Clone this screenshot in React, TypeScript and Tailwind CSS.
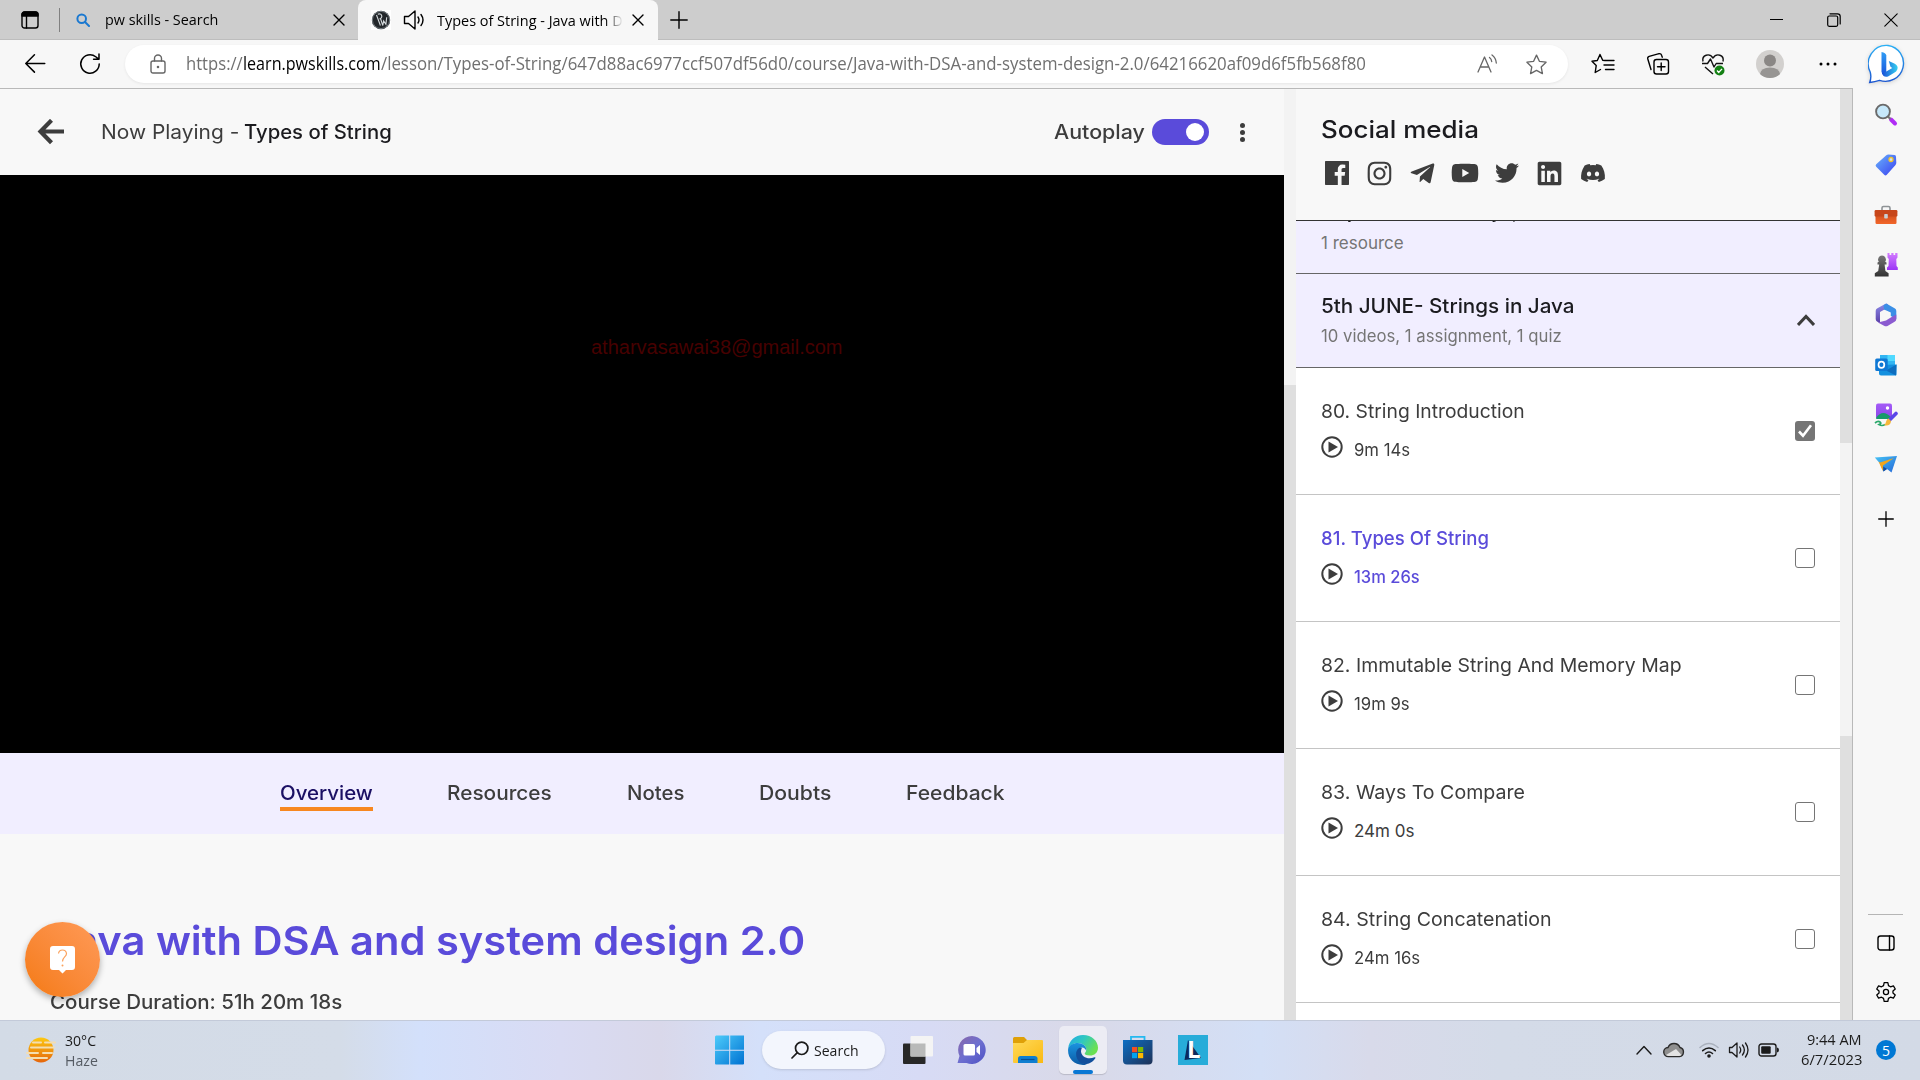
import React, { useLayoutEffect, useRef } from "react";
import { FaInstagram, FaTelegramPlane, FaYoutube, FaTwitter, FaLinkedin, FaDiscord } from "react-icons/fa";

const SANS = "font-['Inter',sans-serif]";
const UI = "font-['Open_Sans',sans-serif]";

/** Single line of text stretched or condensed to a given width. */
function Fit({ w, className = "", children }: { w: number; className?: string; children: React.ReactNode }) {
  const ref = useRef<HTMLSpanElement>(null);
  useLayoutEffect(() => {
    const el = ref.current;
    if (el) el.style.transform = `scaleX(${w / el.offsetWidth})`;
  }, [w]);
  return (
    <div className={`shrink-0 ${className}`} style={{ width: w }}>
      <span ref={ref} className="block w-max origin-left whitespace-pre">{children}</span>
    </div>
  );
}

type IconProps = { className?: string; children: React.ReactNode; box?: string; sw?: number };
function Line({ className = "", children, box = "0 0 24 24", sw = 1.4 }: IconProps) {
  return (
    <svg viewBox={box} className={`block shrink-0 ${className}`} fill="none" stroke="currentColor" strokeWidth={sw} strokeLinecap="round" strokeLinejoin="round">
      {children}
    </svg>
  );
}

const STAR = "M12 2.2l3 6.5 7 .9-5.1 4.9 1.3 7L12 18.1l-6.2 3.4 1.3-7L2 9.6l7-.9z";

function TabStrip() {
  return (
    <div className={`flex h-10 border-b border-[#bdbdbd] bg-[#cdcdcd] text-[15px] leading-[39px] text-black ${UI}`}>
      <div className="flex w-[358px] items-center rounded-br-lg">
        <Line box="0 0 18 18" className="ml-[21px] h-[18px] w-[18px]">
          <rect x="1" y="1" width="16" height="16" rx="2.5" />
          <path d="M1 3.5A2.5 2.5 0 013.5 1h11A2.5 2.5 0 0117 3.5V5H1z" fill="currentColor" />
          <path d="M5.5 5v12" />
        </Line>
        <div className="ml-5 h-6 w-px bg-[#808080]" />
        <Line box="0 0 14 14" sw={2} className="ml-[16px] h-[14px] w-[14px] text-[#1a78d0]">
          <circle cx="5.7" cy="5.7" r="4.3" />
          <path d="M9 9l4 4" />
        </Line>
        <Fit w={113} className="ml-[15px]">pw skills - Search</Fit>
        <Line box="0 0 12 12" className="ml-[115px] h-3 w-3"><path d="M1 1l10 10M11 1L1 11" /></Line>
      </div>
      <div className="flex h-10 w-[300px] items-center rounded-t-lg bg-[#f7f7f7]">
        <div className="ml-[13px] bg-white">
          <svg viewBox="0 0 20 20" className="block h-5 w-5">
            <circle cx="10" cy="10" r="9.2" fill="#23272b" />
            <circle cx="10" cy="10" r="8.600" fill="none" stroke="#7b8288" strokeWidth=".9" />
            <path d="M5.500 5l3.900 10.500M6.800 4.300c3.400-1.800 6 2.700 1.700 4.800M9.500 8.500l2.300 7 .8-4.600 2.300 3.400.8-7" fill="none" stroke="#d5dadd" strokeWidth="1.100" />
          </svg>
        </div>
        <Line box="0 0 22 20" className="ml-3 h-5 w-[22px]">
          <path d="M1.500 6.500h4L12 1v18l-6.500-5.500h-4z" />
          <path d="M15 7q2 3 0 6M18 4.500q4 5.500 0 11" />
        </Line>
        <div className="ml-3 w-[186px] overflow-hidden [mask-image:linear-gradient(to_right,#000_168px,transparent_186px)]">
          <Fit w={186}>Types of String - Java with D</Fit>
        </div>
        <Line box="0 0 12 12" className="ml-[9px] h-3 w-3"><path d="M1 1l10 10M11 1L1 11" /></Line>
      </div>
      <div className="flex flex-1 items-center">
        <Line box="0 0 18 18" className="ml-3 h-[18px] w-[18px]"><path d="M9 .8v16.400M.8 9h16.400" /></Line>
        <div className="ml-[1082px] h-px w-[13px] bg-black" />
        <Line box="0 0 14 14" sw={1.200} className="ml-11 h-[14px] w-[14px]">
          <rect x=".7" y="3" width="10" height="10.300" rx="1.500" />
          <path d="M3 .8h7.500a2.700 2.700 0 012.700 2.700V11" />
        </Line>
        <Line box="0 0 14 14" sw={1.100} className="ml-[43px] h-[14px] w-[14px]"><path d="M.8.8l12.400 12.400M13.200.8L.8 13.200" /></Line>
      </div>
    </div>
  );
}

function BingLogo() {
  return (
    <svg viewBox="0 0 40 40" className="ml-[31px] block h-10 w-10 shrink-0 drop-shadow-sm">
      <defs>
        <linearGradient id="bg1" x1="0" y1="0" x2="0" y2="1"><stop offset="0" stopColor="#2bb0f5" /><stop offset="1" stopColor="#1c56d0" /></linearGradient>
        <linearGradient id="bg2" x1="0" y1="0" x2="1" y2="0"><stop offset="0" stopColor="#1b4fd6" /><stop offset="1" stopColor="#35d0f0" /></linearGradient>
        <linearGradient id="bg3" x1="0" y1="0" x2="0" y2="1"><stop offset="0" stopColor="#2f9df5" /><stop offset="1" stopColor="#1a56dc" /></linearGradient>
      </defs>
      <path d="M20 1.500a18 18 0 11-8.500 34.800q-4.500 1.500-9.800 2.200 2-5 .5-10.500A18.300 18.300 0 0120 1.500z" fill="#fff" stroke="url(#bg1)" strokeWidth="1.400" />
      <path d="M13.500 8q4.300.7 4.800 3.500v15.800L16 31q-2.500-.7-2.500-3.500z" fill="url(#bg3)" />
      <path d="M14 29l4.300-1.500 6-3.500-1.800-1.200-1.700-5.800 5.500 2.500q4.500 2.500 3 6-.7 2-3.500 3.500L20 32.500q-4.500 1.500-6-3.500z" fill="url(#bg2)" />
    </svg>
  );
}

function Toolbar() {
  return (
    <div className={`flex h-12 items-center bg-[#f7f7f7] text-black ${UI}`}>
      <Line className="ml-[22px] h-[26px] w-[26px]"><path d="M21 11.500H3.500M11.500 3.500l-8 8 8 8" /></Line>
      <Line className="ml-[29px] h-[26px] w-[26px]"><path d="M20.500 12a8.500 8.500 0 11-3.200-6.700L20 7.500M20.300 2.700v5h-5" /></Line>
      <div className="ml-[22px] flex h-[38px] w-[1443px] items-center rounded-full bg-white shadow-[0_1px_3px_rgba(0,0,0,0.07)]">
        <Line box="0 0 16 20" className="ml-[25px] h-5 w-4 text-[#666]">
          <rect x="1" y="7" width="14" height="12" rx="2" /><path d="M4.500 7V4.500a3.500 3.500 0 017 0V7" /><circle cx="8" cy="13" r=".6" fill="currentColor" />
        </Line>
        <div className="ml-[20px] flex pb-[2px] text-[17.500px] leading-[36px] text-[#707070]">
          <Fit w={57}>https://</Fit>
          <Fit w={138} className="text-black">learn.pwskills.com</Fit>
          <Fit w={985}>/lesson/Types-of-String/647d88ac6977ccf507df56d0/course/Java-with-DSA-and-system-design-2.0/64216620af09d6f5fb568f80</Fit>
        </div>
        <Line box="0 0 22 20" sw={1.300} className="ml-[111px] h-5 w-[22px] text-[#666]">
          <path d="M1 18L7.500 3 14 18M3.500 13h8M12.500 3.500q2 1.500 2.200 4M15 1q4 3 4.300 8" />
        </Line>
        <Line className="ml-[26px] h-[23px] w-[23px] text-[#666]"><path d={STAR} /></Line>
      </div>
      <Line className="ml-[23px] h-6 w-6">
        <path d="M14 8.500l-2.300-.3L9 2.500 6.300 8.500 1 9.300l4.200 4.300-1 6.900L9.500 17.500M14.500 8.500H23M13 13h10M14.500 17.500H23" />
      </Line>
      <Line className="ml-[31px] h-6 w-6">
        <rect x="8" y="7.500" width="14.500" height="14.500" rx="2.500" /><path d="M15.200 11v7.500M11.500 14.700H19M5 17.500L1.800 7Q1.300 5 3.200 4.400L13 1.700q2-.4 2.600 1.500l.7 2" />
      </Line>
      <svg viewBox="0 0 24 24" className="ml-[31px] block h-6 w-6 shrink-0" fill="none" stroke="#111" strokeWidth="1.400" strokeLinejoin="round">
        <path d="M2 9.500C.5 3 8.500.5 12 6c3.500-5.500 11.500-3 10 3.500M1 11.500h5.500l3-4.500 3.500 8 2.200-3.500H22M4 15l8 7" />
        <circle cx="18.500" cy="18.500" r="5" fill="#138013" stroke="none" /><path d="M16 18.600l1.800 1.800 3.200-3.500" stroke="#fff" />
      </svg>
      <svg viewBox="0 0 28 28" className="ml-[31px] block h-7 w-7 shrink-0">
        <circle cx="14" cy="14" r="14" fill="#d2d0ce" /><circle cx="14" cy="10.500" r="6" fill="#8a8785" />
        <path d="M4 24q1-6.500 10-6.500T24 24q-4 4-10 4T4 24z" fill="#979593" />
      </svg>
      <svg viewBox="0 0 18 4" className="ml-[35px] block h-1 w-[18px] shrink-0"><circle cx="2" cy="2" r="1.500" /><circle cx="9" cy="2" r="1.500" /><circle cx="16" cy="2" r="1.500" /></svg>
      <BingLogo />
    </div>
  );
}

const TABS: [string, number, string][] = [
  ["Overview", 93, "ml-[280px] text-[#1b1064]"],
  ["Resources", 105, "ml-[74px]"],
  ["Notes", 57, "ml-[75px]"],
  ["Doubts", 72, "ml-[75px]"],
  ["Feedback", 99, "ml-[75px]"],
];

function LessonColumn() {
  return (
    <main className={`relative flex h-full w-[1284px] flex-col bg-[#f8f8f8] text-[20px] text-[#3d3d3d] ${SANS}`}>
      <header className="flex h-[86px] shrink-0 items-center">
        <Line box="0 0 28 26" sw={4.200} className="ml-[37px] h-[26px] w-7 [stroke-linecap:butt] [stroke-linejoin:miter]">
          <path d="M27 12.500H4M14.500 1.300L3.500 12.500l11 11.200" />
        </Line>
        <Fit w={138} className="ml-9 leading-[86px]">Now Playing -</Fit>
        <Fit w={148} className="ml-[5px] font-medium leading-[86px] text-[#1b1b1f]">Types of String</Fit>
        <Fit w={91} className="ml-[662px] font-medium leading-[86px]">Autoplay</Fit>
        <div className="ml-[7px] flex h-[26px] w-[57px] items-center justify-end rounded-full bg-[#5a4bda] pr-[5px]">
          <div className="h-[18px] w-[18px] rounded-full bg-white" />
        </div>
        <div className="ml-[31px] flex flex-col gap-[2px]">
          {[0, 1, 2].map((i) => <div key={i} className="h-[5px] w-[5px] rounded-full bg-[#3d3d3d]" />)}
        </div>
      </header>
      <div className="flex h-[578px] shrink-0 bg-black">
        <Fit w={252} className="ml-[591px] mt-[160px] h-6 font-['Liberation_Sans',sans-serif] leading-6 text-[#470000]">atharvasawai38@gmail.com</Fit>
      </div>
      <nav className="flex h-[81px] shrink-0 bg-[#f1eeff] font-medium">
        {TABS.map(([label, w, cls], i) => (
          <div key={label} className={`h-[58px] ${cls} ${i === 0 ? "border-b-4 border-[#f7871f]" : ""}`}>
            <Fit w={w} className="pt-[25px] leading-[31px]">{label}</Fit>
          </div>
        ))}
      </nav>
      <Fit w={755} className="ml-[50px] mt-[77px] text-[40px] font-semibold leading-[60px] text-[#5a4bda]">Java with DSA and system design 2.0</Fit>
      <Fit w={292} className="ml-[50px] mt-[16px] font-medium leading-[30px]">Course Duration: 51h 20m 18s</Fit>
      <div className="absolute bottom-[23px] left-[25px] flex h-[75px] w-[75px] items-center justify-center rounded-full bg-linear-to-tr from-[#f47a0a] to-[#ff9a56] shadow-[0_3px_6px_rgba(0,0,0,0.3)]">
        <svg viewBox="0 0 25 28" className="block h-7 w-[25px]">
          <path d="M3 0h19q3 0 3 3v18q0 3-3 3h-6l-3.500 3.500L9 24H3q-3 0-3-3V3q0-3 3-3z" fill="#fff" />
          <path d="M8.500 7.500q.5-3.500 4-3.500t4 3.500c0 3.500-4 3.500-4 8" fill="none" stroke="#fba15c" strokeWidth="1.200" />
          <circle cx="12.500" cy="19.500" r="1" fill="#fba15c" />
        </svg>
      </div>
    </main>
  );
}

const LESSONS: { title: string; w: number; time: string; tw: number; state?: "done" | "active" }[] = [
  { title: "80. String Introduction", w: 204, time: "9m 14s", tw: 56, state: "done" },
  { title: "81. Types Of String", w: 168, time: "13m 26s", tw: 66, state: "active" },
  { title: "82. Immutable String And Memory Map", w: 361, time: "19m 9s", tw: 56 },
  { title: "83. Ways To Compare", w: 204, time: "24m 0s", tw: 60 },
  { title: "84. String Concatenation", w: 231, time: "24m 16s", tw: 66 },
];

function CoursePanel() {
  const active = "font-medium text-[#5a4bda]";
  return (
    <aside className={`flex h-full w-[544px] flex-col overflow-hidden bg-white text-[#3d3d3d] ${SANS}`}>
      <div className="h-[132px] shrink-0 border-b border-[#333] bg-[#f8f8f8] pl-[25px] pt-[23px]">
        <Fit w={158} className="text-[24px] font-medium leading-[36px] text-[#1b1b1f]">Social media</Fit>
        <div className="mt-[11px] flex h-7 items-center">
          <svg viewBox="2 2 20 20" className="ml-1 block h-6 w-6" fill="currentColor">
            <path d="M21.400 2H2.600a.6.6 0 00-.6.6v18.800a.6.6 0 00.6.6h10.080v-7.750h-2.600v-3h2.600V9a3.640 3.640 0 013.880-4 20.260 20.260 0 012.330.12v2.700H17.300c-1.260 0-1.500.6-1.500 1.470v1.930h3l-.39 3H15.800V22h5.600a.6.6 0 00.6-.6V2.600a.6.6 0 00-.6-.6z" />
          </svg>
          <FaInstagram className="ml-[17px] h-[27px] w-[27px]" />
          <FaTelegramPlane className="ml-[16px] h-[27px] w-[27px]" />
          <FaYoutube className="ml-[15px] h-7 w-7" />
          <FaTwitter className="ml-[16px] h-6 w-6" />
          <FaLinkedin className="ml-[17px] h-[27px] w-[27px]" />
          <FaDiscord className="ml-[17px] h-[26px] w-[26px]" />
        </div>
      </div>
      <div className="h-[53px] shrink-0 overflow-hidden border-b border-[#666] bg-[#f1eeff] pl-[25px]">
        <Fit w={197} className="-mt-[25px] h-[30px] text-[20px] font-medium leading-[30px] text-[#1b1b1f]">Major Basics - Arrays,</Fit>
        <Fit w={83} className="mt-[4px] text-[17px] leading-[26px] text-[#757575]">1 resource</Fit>
      </div>
      <div className="flex h-[94px] shrink-0 items-center justify-between border-b border-[#666] bg-[#f1eeff] pb-[2px] pl-[25px] pr-[25px]">
        <div>
          <Fit w={254} className="text-[20px] font-medium leading-[30px] text-[#1b1b1f]">5th JUNE- Strings in Java</Fit>
          <Fit w={241} className="mt-[2px] text-[17px] leading-[26px] text-[#757575]">10 videos, 1 assignment, 1 quiz</Fit>
        </div>
        <Line box="0 0 18 12" sw={3} className="h-3 w-[18px] [stroke-linecap:butt] [stroke-linejoin:miter]"><path d="M1 11l8-8.500 8 8.500" /></Line>
      </div>
      {LESSONS.map((l) => (
        <div key={l.title} className="flex h-[127px] shrink-0 justify-between border-b border-[#c4c4c4] pl-[25px] pr-[25px]">
          <div className="pt-[29px]">
            <Fit w={l.w} className={`text-[19px] leading-[30px] ${l.state === "active" ? active : ""}`}>{l.title}</Fit>
            <div className="mt-[8px] flex">
              <svg viewBox="0 0 22 22" className="mt-[1px] block h-[22px] w-[22px]">
                <circle cx="11" cy="11" r="9.700" fill="none" stroke="#3d3d3d" strokeWidth="2" /><path d="M7.500 5.500L17 11l-9.500 5.500z" fill="#3d3d3d" />
              </svg>
              <Fit w={l.tw} className={`ml-[11px] text-[17px] leading-[30px] ${l.state === "active" ? active : ""}`}>{l.time}</Fit>
            </div>
          </div>
          <div className={`mt-[53px] flex h-5 w-5 items-center justify-center rounded-[3px] ${l.state === "done" ? "bg-[#757575]" : "border border-[#757575] bg-white"}`}>
            {l.state === "done" && <Line box="0 0 16 16" sw={2.600} className="h-4 w-4 text-white [stroke-linecap:butt] [stroke-linejoin:miter]"><path d="M2 8.500l4 4.200L14 2.300" /></Line>}
          </div>
        </div>
      ))}
    </aside>
  );
}

function SideIcon({ children }: { children: React.ReactNode }) {
  return (
    <div className="flex h-[50px] items-center justify-center">
      <svg viewBox="0 0 24 24" className="block h-6 w-6">{children}</svg>
    </div>
  );
}

function EdgeSidebar() {
  return (
    <aside className="flex h-full w-[68px] flex-col border-l border-[#b9b9b9] bg-[#f7f7f7] pr-[2px] pt-[2px]">
      <svg className="absolute h-0 w-0">
        <defs>
          <linearGradient id="tag" x1="0" y1="0" x2="1" y2="1"><stop offset="0" stopColor="#69b4fb" /><stop offset="1" stopColor="#3a3ff0" /></linearGradient>
          <linearGradient id="box" x1="0" y1="0" x2="0" y2="1"><stop offset="0" stopColor="#d4511e" /><stop offset="1" stopColor="#f2662a" /></linearGradient>
          <linearGradient id="rook" x1="0" y1="0" x2="0" y2="1"><stop offset="0" stopColor="#d37cff" /><stop offset="1" stopColor="#9b35f5" /></linearGradient>
          <linearGradient id="pawn" x1="0" y1="0" x2="0" y2="1"><stop offset="0" stopColor="#777" /><stop offset="1" stopColor="#333" /></linearGradient>
          <linearGradient id="pic" x1="0" y1="0" x2="0" y2="1"><stop offset="0" stopColor="#a45bf7" /><stop offset="1" stopColor="#8b46e8" /></linearGradient>
          <linearGradient id="m3" x1="0" y1="0" x2="0" y2="1"><stop offset="0" stopColor="#8d8be8" /><stop offset="1" stopColor="#5a3fa8" /></linearGradient>
          <linearGradient id="pl" x1="0" y1="0" x2="1" y2="1"><stop offset="0" stopColor="#46c4f5" /><stop offset="1" stopColor="#2467d8" /></linearGradient>
        </defs>
      </svg>
      <SideIcon>
        <path d="M17 16.500l4 4" stroke="#b02cf5" strokeWidth="4" strokeLinecap="round" />
        <path d="M13.500 13l3 3" stroke="#777" strokeWidth="2.200" />
        <circle cx="9" cy="8.500" r="6.900" fill="#c6e8fa" stroke="#6a6a6a" strokeWidth="1.900" />
      </SideIcon>
      <SideIcon>
        <path d="M12 2.500q1-1 2.500-1l6 .5q1.500.2 1.500 1.700l.3 6q0 1.300-1 2.500l-8.500 9.600q-1.300 1.200-2.600 0l-8-8q-1.200-1.400 0-2.600z" fill="url(#tag)" />
        <circle cx="17" cy="6.500" r="2" fill="#cfe1fb" stroke="#f3c52a" strokeWidth="1.300" />
      </SideIcon>
      <SideIcon>
        <path d="M8 8V5q0-1.500 1.500-1.500h5Q16 3.500 16 5v3" fill="none" stroke="#8e9396" strokeWidth="1.600" />
        <rect x="1.500" y="12" width="21" height="9" rx="1.200" fill="url(#box)" /><rect x=".6" y="7" width="22.800" height="6.500" rx="1.200" fill="#c7461a" />
        <rect x="10.200" y="11" width="3.600" height="4.500" rx=".8" fill="#c9cfd2" />
      </SideIcon>
      <SideIcon>
        <path d="M13.500 0h2v2h1.800V0h2.200v2h1.700V0H23.500v4.500L22.300 6l.2 7 1.300 1.500V17H13v-2.500l1.500-1.500.3-7-1.300-1.500z" fill="url(#rook)" />
        <path d="M8 2.500a4 4 0 013.200 6.300l1.300.7v2h-1.900l.8 6.500 3.200 2.300V23.500H.8v-3.200L4.200 18l1-6.500H3.500v-2l1.300-.7A4 4 0 018 2.500z" fill="url(#pawn)" />
      </SideIcon>
      <SideIcon>
        <path d="M12 .5L3 5.500Q1.700 6.300 1.700 8v8q0 1.700 1.300 2.500l3 1.700V9l8-4.500V1.600Q13 .2 12 .5z" fill="url(#m3)" />
        <path d="M14 1.500l7 4q1.300.8 1.300 2.500v8l-5.500-3V9.500L10 6.500l-.5-4Q12-.5 14 1.500z" fill="#3b8fe6" />
        <path d="M22.300 11.500V16q0 1.700-1.300 2.500l-7.500 4.500q-1.500.7-3 0L4 19.500l8-2 4.800-3z" fill="#8b5bd0" />
        <path d="M9 9.500l3-1.700 3.700 2v4.400l-3.700 2-3.700-2V9.800z" fill="#f7f7f7" />
      </SideIcon>
      <SideIcon>
        <path d="M6 2h15v12H6z" fill="#31b5f2" /><path d="M13.500 2H21v6h-7.500z" fill="#50d9ff" /><path d="M5 12l17.500-.5V21.500q0 1-1 1H7q-2 0-2-2z" fill="#1490df" />
        <path d="M22.500 11.500L12 17.500l10 5z" fill="#0d6dbf" /><rect x="1.200" y="5.500" width="12.500" height="12.500" rx="1.500" fill="#0f78d4" />
        <ellipse cx="7.400" cy="11.700" rx="2.900" ry="3.100" fill="none" stroke="#fff" strokeWidth="1.700" />
      </SideIcon>
      <SideIcon>
        <rect x="2" y=".5" width="16" height="15.500" rx="2" fill="url(#pic)" /><circle cx="13.500" cy="5" r="1.700" fill="#fff" />
        <path d="M2 15q7-10 15.500 0v1H3q-1 0-1-1z" fill="#189a6b" />
        <path d="M1 20q3-2.500 5-1t-1 2.500q3 2 6 0" fill="none" stroke="#2aa86a" strokeWidth="1.700" />
        <path d="M22 10.500L15.500 17" stroke="#5a46e8" strokeWidth="3.600" strokeLinecap="round" /><path d="M14.500 15.500l2.500 2.500c0 4-4 5.500-7 4 2.500-1 1.500-5.500 4.500-6.500z" fill="#f5b83a" />
      </SideIcon>
      <SideIcon>
        <path d="M.8 4.500L23 3 17.500 19.500l-4.500-3.500-3.500 2.500L6 10.500z" fill="url(#pl)" /><path d="M6 9.500L20 5 9 12.500l-.2 5.500L4.500 8.500z" fill="#f2a51c" />
        <path d="M9.200 13.500l3.800 2.500-3.700 2.500z" fill="#184c9c" />
      </SideIcon>
      <div className="flex h-[58px] items-center justify-center"><Line box="0 0 16 16" sw={1.300} className="h-4 w-4 text-black"><path d="M8 .7v14.600M.7 8h14.600" /></Line></div>
      <div className="mx-auto mt-auto h-px w-[35px] bg-[#b5b5b5]" />
      <div className="mt-[19px] flex justify-center">
        <Line box="0 0 18 18" className="h-[18px] w-[18px] text-black"><rect x="1" y="2" width="16" height="14" rx="2.500" /><path d="M12.500 2v14" /></Line>
      </div>
      <div className="mb-[17px] mt-[29px] flex justify-center">
        <Line className="h-[22px] w-[22px] text-black">
          <path d="M10 1.700h4l.7 3.300 2.200 1.300 3.200-1 2 3.400-2.500 2.200v2.200l2.500 2.200-2 3.400-3.200-1-2.200 1.300-.7 3.300h-4L9.300 19l-2.200-1.300-3.200 1-2-3.400 2.500-2.200v-2.200L1.900 8.700l2-3.400 3.200 1L9.300 5z" /><circle cx="12" cy="12" r="2.800" />
        </Line>
      </div>
    </aside>
  );
}

function Taskbar() {
  return (
    <footer className={`flex h-[60px] items-center border-t border-[#c3cad9] bg-[linear-gradient(90deg,#d3dbe6_0px,#d4dce8_340px,#d3e0fb_420px,#d9dbf3_560px,#d9d8ea_660px,#d4e0fa_760px,#d7dbf5_920px,#d9d9e8_1080px,#d3dff6_1260px,#d8daea_1370px,#d4dbe8_1500px,#d3dae6_1920px)] pb-px text-[15px] text-[#1b1b1b] ${UI}`}>
      <svg viewBox="0 0 30 28" className="ml-[26px] block h-7 w-[30px]">
        <defs><linearGradient id="sun" x1="0" y1="0" x2="0" y2="1"><stop offset="0" stopColor="#fdc912" /><stop offset="1" stopColor="#e5650b" /></linearGradient></defs>
        <circle cx="15" cy="14" r="12.500" fill="url(#sun)" />
        <path d="M7 6.500h8M19 6.500h10M5 11.500h23M1 17h11M17 17h9M1 22h20" stroke="#f4deb0" strokeWidth="2" strokeLinecap="round" />
      </svg>
      <div className="ml-[9px] w-10 pb-px leading-5">
        <Fit w={31}>30°C</Fit>
        <Fit w={33} className="text-[#555b63]">Haze</Fit>
      </div>
      <svg viewBox="0 0 30 30" className="ml-[610px] block h-[30px] w-[30px]">
        <defs><linearGradient id="win" x1="0" y1="0" x2="1" y2="1"><stop offset="0" stopColor="#4dcbfa" /><stop offset="1" stopColor="#0072d2" /></linearGradient></defs>
        <path d="M1 .5h13.200v14.200H0V1.500zM15.200.5H29v14.200H15.200zM0 15.700h14.200V29.500H1q-1 0-1-1zM15.200 15.700H29v13q0 .8-1 .8H15.200z" fill="url(#win)" />
      </svg>
      <div className="ml-[17px] flex h-[38px] w-[123px] items-center rounded-full bg-[#f3f6fd] shadow-sm">
        <Line box="0 0 18 18" sw={1.700} className="ml-[29px] h-[18px] w-[18px]"><circle cx="10.700" cy="7.300" r="6.200" /><path d="M6.300 11.700L1 17" /></Line>
        <Fit w={45} className="ml-[5px] leading-[36px]">Search</Fit>
      </div>
      <svg viewBox="0 0 30 30" className="ml-[18px] block h-[30px] w-[30px]">
        <rect x="0" y="8.500" width="22.500" height="20.500" rx="1" fill="#282828" /><rect x="7.500" y="1" width="22.500" height="20.500" rx="1" fill="#f4f4f4" /><path d="M7.500 8.500h15v13h-15z" fill="#b9bab9" />
      </svg>
      <svg viewBox="0 0 30 30" className="ml-[24px] block h-[30px] w-[30px]">
        <defs><linearGradient id="chat" x1="0" y1="0" x2="1" y2="1"><stop offset="0" stopColor="#8a67a8" /><stop offset=".5" stopColor="#6d6fd0" /><stop offset="1" stopColor="#4d50c4" /></linearGradient></defs>
        <path d="M15 1a14 14 0 11-5.500 27H.5l2-7A14 14 0 0115 1z" fill="url(#chat)" />
        <rect x="6.500" y="9" width="11.500" height="11.500" rx="1.500" fill="#fff" /><path d="M19.500 13l3.500-3v10l-3.500-3z" fill="#fff" />
      </svg>
      <svg viewBox="0 0 30 30" className="ml-[26px] block h-[30px] w-[30px]">
        <defs><linearGradient id="fold" x1="0" y1="0" x2="1" y2="1"><stop offset="0" stopColor="#ffda5a" /><stop offset="1" stopColor="#fab912" /></linearGradient></defs>
        <path d="M1.500 2H11l3 3h15v8H0V3.500Q0 2 1.500 2z" fill="#dfa008" /><path d="M0 8h10.500l3.500-3h15q1 0 1 1v22H1q-1 0-1-1z" fill="url(#fold)" />
        <path d="M5 28v-4.500Q5 21 7.500 21h14q3 0 3 2.500V28z" fill="#0f7ed0" /><path d="M8 24.500h13.500" stroke="#0a4f94" strokeWidth="1.200" />
      </svg>
      <div className="ml-4 flex h-12 w-12 flex-col items-center rounded-[5px] bg-[#ececf4] shadow-[0_1px_1px_rgba(0,0,0,0.15)]">
        <svg viewBox="0 0 30 30" className="mt-[9px] block h-[30px] w-[30px]">
          <defs>
            <linearGradient id="e1" x1="0" y1="0" x2="1" y2=".5"><stop offset="0" stopColor="#20a8e8" /><stop offset=".5" stopColor="#30c8c0" /><stop offset="1" stopColor="#6be052" /></linearGradient>
            <linearGradient id="e2" x1="0" y1="0" x2="0" y2="1"><stop offset="0" stopColor="#1a94e0" /><stop offset="1" stopColor="#0c59a4" /></linearGradient>
          </defs>
          <path d="M.2 13.500C1 5.500 7 0 15 0c9 0 15 6.300 15 12.700 0 5-3.800 7.800-8 7.800-3.500 0-5.300-1-5.300-2 0-.8 1.600-1.400 1.600-4C18.300 11 14.500 8 10 8S1.500 10.500.2 13.500z" fill="url(#e1)" />
          <path d="M.2 13.500C1.500 10.300 5 8 9.700 8c5 0 8.600 3 8.600 6.500l-.2 1c-.5-1.500-2-3-4.100-3-3 0-5.500 3-5 7.500.6 5 5 9 10 9.500-1.500.5-3 .5-4 .5C5.500 30-1 22.500.2 13.500z" fill="url(#e2)" />
          <path d="M11 13c-5 3.500-3 11.500 1.500 14.800 4.500 3 11.500.8 14.800-4.500.6-1-.3-1.300-.8-1C20 25 13.500 22 13 16.500q0-2 1-3.700-1.500-.6-3 .2z" fill="#124f9c" />
        </svg>
        <div className="mt-[5px] h-1 w-5 rounded-full bg-[#0a78d4]" />
      </div>
      <svg viewBox="0 0 30 30" className="ml-4 block h-[30px] w-[30px]">
        <defs><linearGradient id="store" x1="0" y1="0" x2="1" y2="1"><stop offset="0" stopColor="#0d6fc4" /><stop offset="1" stopColor="#1e3157" /></linearGradient></defs>
        <path d="M8 7V1.800h13.500V7" fill="none" stroke="#25b9f0" strokeWidth="1.800" /><path d="M0 5h29.500v20.500q0 4-4 4H4q-4 0-4-4z" fill="url(#store)" />
        <path d="M9 12h5.200v5.200H9z" fill="#f25022" /><path d="M15 12h5.200v5.200H15z" fill="#7fba00" /><path d="M9 18h5.200v5.200H9z" fill="#00a4ef" /><path d="M15 18h5.200v5.200H15z" fill="#ffb900" />
      </svg>
      <div className="relative ml-[25px] h-[30px] w-[30px] bg-[#27acd9]">
        <svg viewBox="0 0 30 30" className="block h-[30px] w-[30px]"><path d="M10 5L6.500 25 23 23z" fill="#0c2a5c" /></svg>
        <span className="absolute left-[9px] top-0 text-[24px] font-bold leading-[28px] text-white">L</span>
      </div>
      <Line box="0 0 16 10" className="ml-[428px] h-[10px] w-4"><path d="M1 9l7-7.500L15 9" /></Line>
      <svg viewBox="0 0 22 16" className="ml-[11px] block h-4 w-[22px]">
        <path d="M5.500 14.500a4.500 4.500 0 01-.5-9 6.500 6.500 0 0112 0 4.600 4.600 0 01-.5 9z" fill="#8f8f8f" stroke="#2c2c2c" strokeWidth="1.400" />
        <path d="M3 13l10-6 5.500 6q-1 1-2.500 1H5.500Q4 14 3 13z" fill="#e3e3e3" />
      </svg>
      <Line box="0 0 20 16" sw={1.600} className="ml-[14px] h-4 w-5">
        <path d="M1 5.500q9-8 18 0" stroke="#aab1bd" /><path d="M3.700 8.700q6.300-5.400 12.600 0M6.500 11.500q3.500-3 7 0" /><circle cx="10" cy="14" r="1" fill="currentColor" />
      </Line>
      <Line box="0 0 22 18" sw={1.300} className="ml-[9px] h-[18px] w-[22px]">
        <path d="M1.500 6.500H4L9 2v14l-5-4.500H1.500z" /><path d="M11.700 6q2 3 0 6M14.500 4q3.700 5 0 10M17.500 2q5 7 0 14" />
      </Line>
      <svg viewBox="0 0 22 14" className="ml-[8px] block h-[14px] w-[22px]">
        <rect x="1" y="1" width="17" height="12" rx="2.500" fill="none" stroke="#1b1b1b" strokeWidth="1.400" /><rect x="3.200" y="3.200" width="9.500" height="7.600" rx="1" fill="#1b1b1b" /><path d="M19 4.500q2 .3 2 2.500t-2 2.500z" fill="#1b1b1b" />
      </svg>
      <div className="ml-[21px] flex w-[61px] flex-col items-end pb-[2px] leading-5">
        <Fit w={55}>9:44 AM</Fit>
        <Fit w={61}>6/7/2023</Fit>
      </div>
      <div className="ml-[14px] flex h-5 w-5 items-center justify-center rounded-full bg-[#0078d4] text-[14px] text-white">5</div>
    </footer>
  );
}

export default function App() {
  return (
    <div className="flex h-[1080px] w-[1920px] flex-col overflow-hidden bg-[#f7f7f7]">
      <TabStrip />
      <Toolbar />
      <div className="flex h-[932px]">
        <div className="flex w-[1852px] border-t border-[#b9b9b9]">
          <LessonColumn />
          <div className="w-3 bg-[#f3f3f3] pt-[296px]"><div className="h-full bg-[#dfdfdf]" /></div>
          <CoursePanel />
          <div className="flex w-3 flex-col bg-[#dfdfdf]"><div className="mt-[354px] h-[293px] bg-[#f3f3f3]" /></div>
        </div>
        <EdgeSidebar />
      </div>
      <Taskbar />
    </div>
  );
}
